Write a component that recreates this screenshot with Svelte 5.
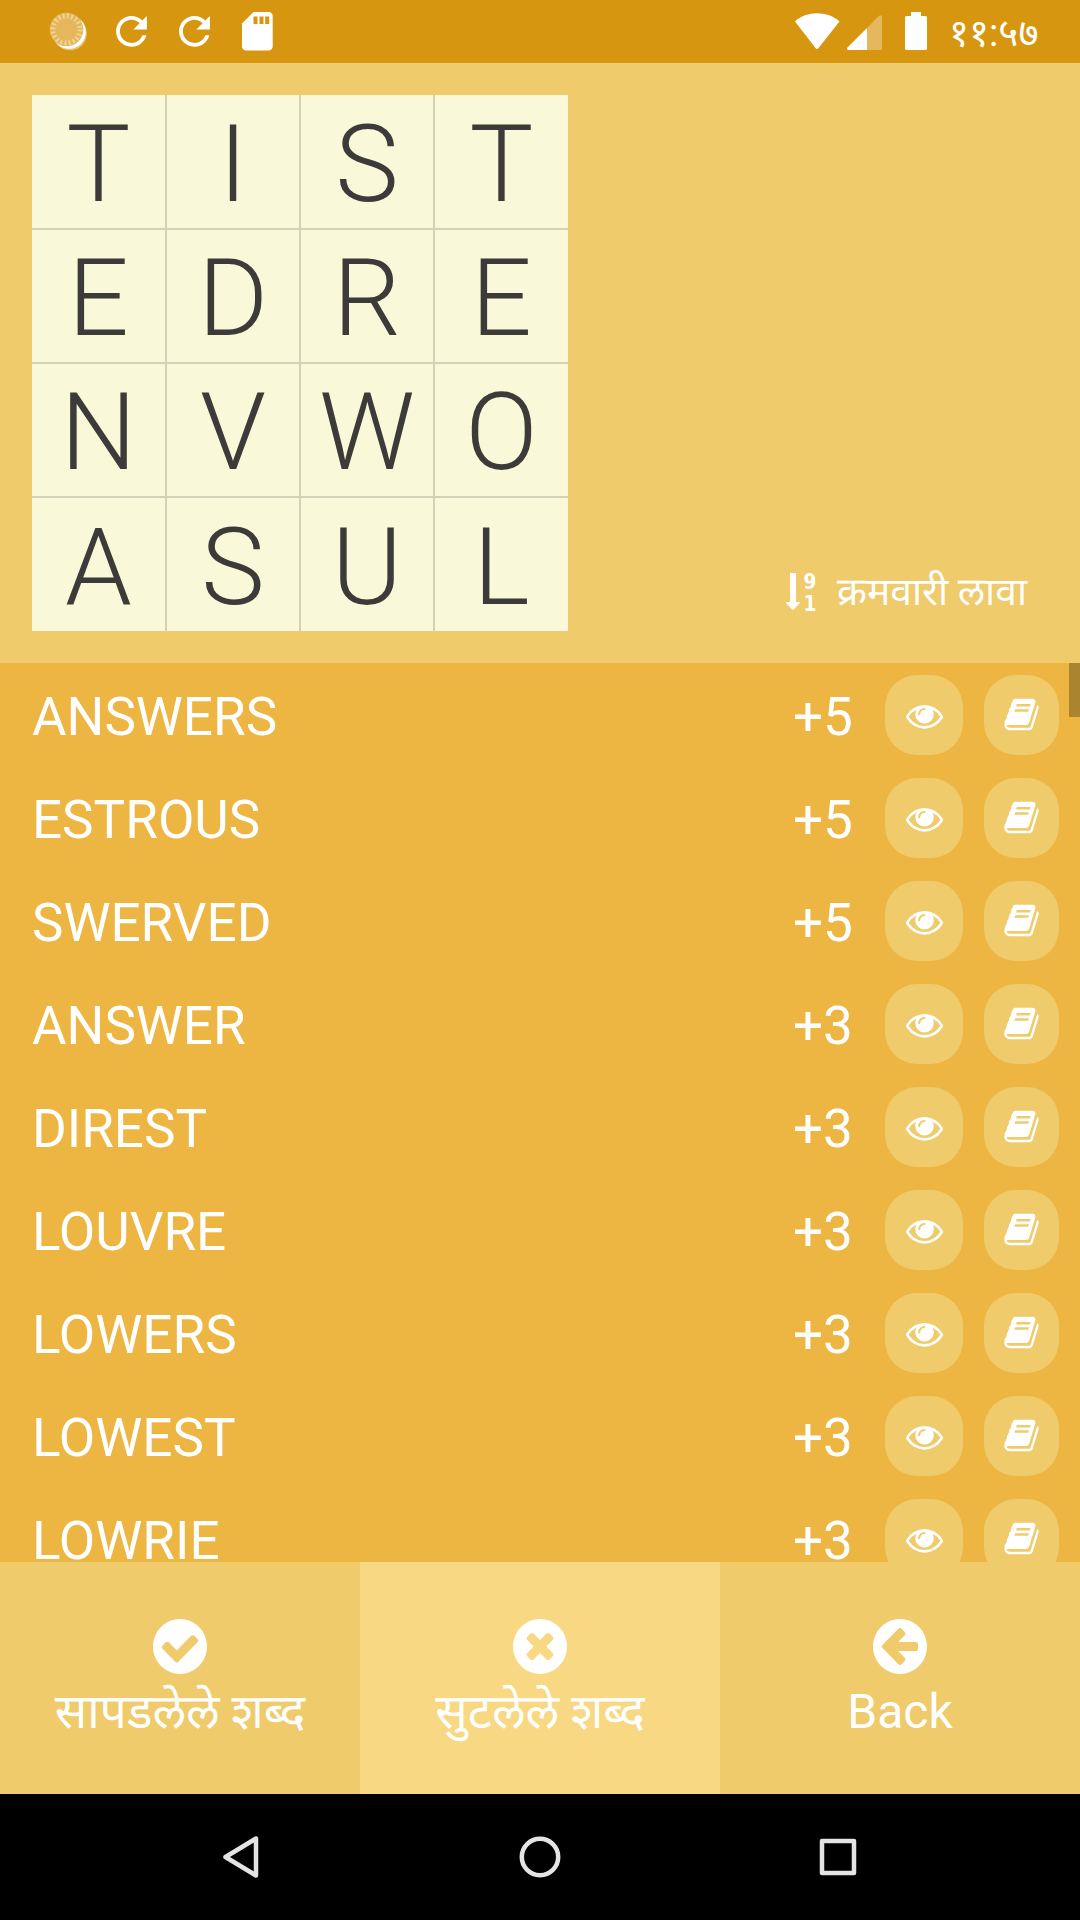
<script>
  const letters = [...'TISTEDREN', ...'VWOASUL'];
  const words = [
    ['ANSWERS', 5], ['ESTROUS', 5], ['SWERVED', 5],
    ['ANSWER', 3], ['DIREST', 3], ['LOUVRE', 3],
    ['LOWERS', 3], ['LOWEST', 3], ['LOWRIE', 3]
  ];
  const disc = 'M1664 896q0 209-103 385.5t-279.5 279.5-385.5 103-385.5-103-279.5-279.5-103-385.5 103-385.5 279.5-279.5 385.5-103 385.5 103 279.5 279.5 103 385.5z';
  const tabs = [
    { label: 'सापडलेले शब्द', active: false, icon: 'M1412 734q0-28-18-46l-91-90q-19-19-45-19t-45 19l-408 407-226-226q-19-19-45-19t-45 19l-91 90q-18 18-18 46 0 27 18 45l362 362q19 19 45 19 27 0 46-19l543-543q18-18 18-45z' },
    { label: 'सुटलेले शब्द', active: true, icon: 'M1277 1122q0-26-19-45l-181-181 181-181q19-19 19-45 0-27-19-46l-90-90q-19-19-46-19-26 0-45 19l-181 181-181-181q-19-19-45-19-27 0-46 19l-90 90q-19 19-19 46 0 26 19 45l181 181-181 181q-19 19-19 45 0 27 19 46l90 90q19 19 46 19 26 0 45-19l181-181 181 181q19 19 45 19 27 0 46-19l90-90q19-19 19-46z' },
    { label: 'Back', active: false, icon: 'M1408 960v-128q0-26-19-45t-45-19h-502l189-189q19-19 19-45t-19-45l-91-91q-18-18-45-18t-45 18l-362 362-91 91q-18 18-18 45t18 45l91 91 362 362q18 18 45 18t45-18l91-91q18-18 18-45t-18-45l-189-189h502q26 0 45-19t19-45z' }
  ];
</script>

<div class="screen" lang="mr">
  <header class="status">
    <svg class="notices" width="300" height="63" viewBox="0 0 300 63">
      <circle cx="70" cy="33.5" r="16.8" fill="#fff" fill-opacity=".45" />
      <circle cx="69" cy="32" r="16.8" fill="#fff" />
      <circle cx="66.5" cy="29.5" r="16.8" fill="#e4b75c" />
      <circle cx="66.5" cy="29.5" r="13.6" fill="none" stroke="#efd397" stroke-width="5" stroke-dasharray="1.9 2.373" />
      {#each [108.3, 171.3] as x}
        <path transform="translate({x} 8.2) scale(1.93)" fill="#fff" d="M17.65 6.35C16.2 4.9 14.21 4 12 4c-4.42 0-7.99 3.58-7.99 8s3.57 8 7.99 8c3.73 0 6.84-2.55 7.73-6h-2.08c-.82 2.33-3.04 4-5.65 4-3.31 0-6-2.69-6-6s2.69-6 6-6c1.66 0 3.14.69 4.22 1.78L13 11h7V4l-2.35 2.35z" />
      {/each}
      <path transform="translate(234.3 8.2) scale(1.92)" fill="#fff" d="M18 2h-8L4.02 8 4 20c0 1.1.9 2 2 2h12c1.1 0 2-.9 2-2V4c0-1.1-.9-2-2-2z" />
      <path fill="#d7960f" d="M253.500 16.500h4v7.500h-4zM259.500 16.500h4v7.500h-4zM265.200 16.500h4v7.500h-4z" />
    </svg>
    <svg class="system" width="150" height="63" viewBox="790 0 150 63">
      <path fill="#fff" d="M795 21.5C806 10.500 828 10.500 839.500 21.500L818.500 48Q817 50 815.500 48Z" />
      <path fill="#e5b85e" d="M867 28L879 15.800Q882 14 882 17V48.500Q882 50 880.500 50H867Z" />
      <path fill="#fff" d="M867 28V50H849Q846 50 847.500 47.500Z" />
      <path fill="#fff" d="M911 12h10v4h4.500q1.500 0 1.500 1.500v31q0 1.500-1.500 1.500h-19q-1.500 0-1.500-1.500v-31q0-1.500 1.500-1.500h4.500z" />
    </svg>
    <span class="time">११:५७</span>
  </header>

  <section class="top">
    <div class="board">
      {#each letters as letter}<div class="cell">{letter}</div>{/each}
    </div>
    <button class="sort">
      <svg width="35" height="42" viewBox="0 0 35 42" fill="#fff">
        <path d="M5 2.500Q5 2 5.500 2H10.500Q11 2 11 2.500V31H14.500Q15.500 31.200 14.500 32.300L8.500 38.700Q8 39.200 7.500 38.700L1.200 32.300Q.4 31.200 1.500 31H5Z" />
        <text x="18.500" y="18" class="digit">9</text>
        <text x="18.500" y="39.500" class="digit">1</text>
      </svg>
      <span>क्रमवारी लावा</span>
    </button>
  </section>

  <main class="list">
    {#each words as [word, score]}
      <div class="row">
        <span class="word">{word}</span>
        <span class="score">+{score}</span>
        <button class="pill eye" aria-label="Show word">
          <svg width="37" height="37" viewBox="0 0 1792 1792"><path d="M1664 960q-152-236-381-353 61 104 61 225 0 185-131.5 316.500t-316.500 131.500-316.500-131.500-131.500-316.500q0-121 61-225-229 117-381 353 133 205 333.500 326.500t434.500 121.500 434.500-121.500 333.500-326.500zm-720-384q0-20-14-34t-34-14q-125 0-214.500 89.500t-89.500 214.500q0 20 14 34t34 14 34-14 14-34q0-86 61-147t147-61q20 0 34-14t14-34zm848 384q0 34-20 69-140 230-376.500 368.500t-499.500 138.500-499.500-139-376.500-368q-20-35-20-69t20-69q140-229 376.500-368t499.500-139 499.500 139 376.500 368q20 35 20 69z" /></svg>
        </button>
        <button class="pill book" aria-label="Define word">
          <svg width="37" height="37" viewBox="0 0 1792 1792"><path d="M1703 478q40 57 18 129l-275 906q-19 64-76.500 107.500t-122.500 43.500h-923q-77 0-148.500-53.500t-99.500-131.500q-24-67-2-127 0-4 3-27t4-37q1-8-3-21.500t-3-19.500q2-11 8-21t16.500-23.500 16.500-23.500q23-38 45-91.500t30-91.500q3-10 .5-30t-.5-28q3-11 17-28t17-23q21-36 42-92t25-90q1-9-2.500-32t.5-28q4-13 22-30.500t22-22.500q19-26 42.500-84.500t27.500-96.500q1-8-3-25.500t-2-26.500q2-8 9-18t18-23 17-21q8-12 16.500-30.500t15-35 16-36 19.500-32 26.500-23.500 36-11.500 47.500 5.500l-1 3q38-9 51-9h761q74 0 114 56t18 130l-274 906q-36 119-71.500 153.500t-128.500 34.500h-869q-27 0-38 15-11 16-1 43 24 70 144 70h923q29 0 56-15.500t35-41.500l300-987q7-22 5-57 38 15 59 43zm-1064 2q-4 13 2 22.500t20 9.500h608q13 0 25.500-9.500t16.500-22.500l21-64q4-13-2-22.500t-20-9.500h-608q-13 0-25.500 9.500t-16.500 22.500zm-83 256q-4 13 2 22.500t20 9.500h608q13 0 25.500-9.500t16.500-22.500l21-64q4-13-2-22.500t-20-9.500h-608q-13 0-25.500 9.500t-16.500 22.500z" /></svg>
        </button>
      </div>
    {/each}
    <div class="thumb"></div>
  </main>

  <nav class="tabs">
    {#each tabs as tab}
      <button class="tab" class:active={tab.active}>
        <svg width="64" height="64" viewBox="0 0 1792 1792"><path fill-rule="evenodd" transform="translate(14 14) scale(.984 1)" d="{tab.icon}{disc}" /></svg>
        <span>{tab.label}</span>
      </button>
    {/each}
  </nav>

  <footer class="system-nav">
    <svg width="48" height="48" viewBox="0 0 48 48"><path d="M38 5.500V42.500L7.500 24Z" /></svg>
    <svg width="48" height="48" viewBox="0 0 48 48"><circle cx="24" cy="24" r="18.200" /></svg>
    <svg width="48" height="48" viewBox="0 0 48 48"><rect x="8" y="8" width="32" height="32" /></svg>
  </footer>
</div>

<style>
  :global(body) { margin: 0; background: #000; }
  .screen {
    width: 1080px; height: 1920px; overflow: hidden;
    display: flex; flex-direction: column;
    font-family: Roboto, 'Noto Sans Devanagari', 'Noto Sans', sans-serif; color: #fff;
  }
  svg { display: block; flex: none; overflow: visible; }
  button { border: 0; margin: 0; padding: 0; font: inherit; color: inherit; background: none; }
  .status { height: 63px; flex: none; display: flex; background: #d7960f; }
  .system { margin-left: 490px; }
  .time { margin-left: 9px; font-size: 38.500px; line-height: 66px; white-space: nowrap; }
  .top {
    box-sizing: border-box; height: 600px; flex: none; padding: 32px 53px 32px 32px;
    display: flex; justify-content: space-between; align-items: flex-end; background: #efcb6b;
  }
  .board {
    display: grid; gap: 2px; background: #d3d1b7;
    grid-template-columns: 133px 132px 132px 133px;
    grid-template-rows: 133px 132px 132px 133px;
  }
  .cell {
    box-sizing: border-box; padding-top: 6px;
    display: flex; align-items: center; justify-content: center;
    background: #f9f8d8; color: #3d3b39; font-size: 107px; font-weight: 300; line-height: 126px;
  }
  .sort { display: flex; align-items: center; gap: 17px; margin-bottom: 18px; font-size: 39px; line-height: 42px; }
  .sort span { padding-top: 1px; }
  .digit { font: 700 20.500px 'DejaVu Sans Condensed', 'DejaVu Sans', sans-serif; }
  .list { position: relative; height: 899px; flex: none; overflow: hidden; background: #edb541; }
  .row { box-sizing: border-box; height: 103px; padding: 12px 21px 11px 32px; display: flex; align-items: center; font-size: 53px; }
  .word { flex: 1; padding-top: 4px; }
  .score { width: 92px; padding-top: 4px; }
  .pill { height: 80px; border-radius: 32px; display: flex; align-items: center; justify-content: center; background: #efcb6b; }
  .pill svg, .tab svg { fill: #fff; }
  .eye { width: 78px; margin-right: 21px; }
  .book { width: 75px; }
  .book svg { margin-bottom: 1px; }
  .thumb { position: absolute; top: 0; right: 0; width: 11px; height: 54px; background: #ab842f; }
  .tabs { height: 232px; flex: none; display: grid; grid-template-columns: repeat(3, 1fr); background: #efcb6b; }
  .tab { display: flex; flex-direction: column; align-items: center; padding-top: 52px; font-size: 48px; line-height: 68px; white-space: nowrap; }
  .active { background: #f8d882; }
  .system-nav { height: 126px; display: flex; align-items: center; justify-content: center; gap: 250px; background: #000; }
  .system-nav svg { fill: none; stroke: #e4e4e4; stroke-width: 4.500; stroke-linejoin: round; }
</style>
